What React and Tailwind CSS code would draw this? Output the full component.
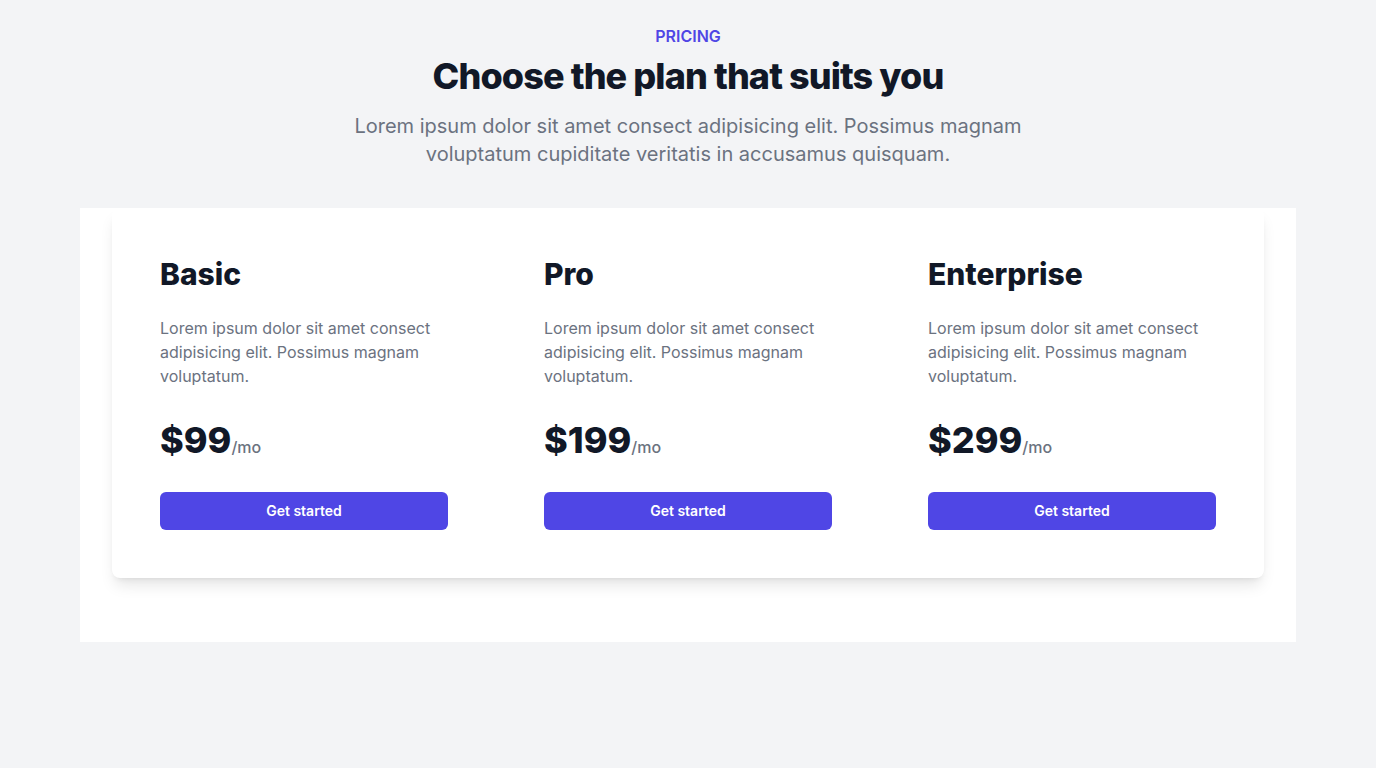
const plans = [
  { name: "Basic", price: "$99" },
  { name: "Pro", price: "$199" },
  { name: "Enterprise", price: "$299" },
];

const desc =
  "Lorem ipsum dolor sit amet consect adipisicing elit. Possimus magnam voluptatum.";

function PlanColumn({ plan }) {
  return (
    <div className="flex flex-col">
      <h3 className="text-3xl font-extrabold text-[#111827]">{plan.name}</h3>
      <p className="mt-6 text-base text-[#6b7280]">{desc}</p>
      <p className="mt-8 flex items-baseline">
        <span className="text-4xl font-extrabold text-[#111827]">
          {plan.price}
        </span>
        <span className="text-base font-medium text-[#6b7280]">/mo</span>
      </p>
      <button className="mt-8 h-[38px] w-full rounded-md bg-[#4f46e5] text-sm font-semibold text-white">
        Get started
      </button>
    </div>
  );
}

export default function App() {
  return (
    <div
      className="min-h-screen bg-[#f3f4f6] pt-6"
      style={{ fontFamily: "Inter, 'Noto Sans', sans-serif" }}
    >
      <div className="mx-auto max-w-3xl text-center">
        <h2 className="text-base font-semibold text-[#4f46e5]">PRICING</h2>
        <p className="mt-2 text-4xl font-extrabold tracking-tight text-[#111827]">
          Choose the plan that suits you
        </p>
        <p className="mx-auto mt-4 max-w-2xl text-xl text-[#6b7280]">
          Lorem ipsum dolor sit amet consect adipisicing elit. Possimus magnam
          voluptatum cupiditate veritatis in accusamus quisquam.
        </p>
      </div>
      <div className="mx-20 mt-10 bg-white px-8 pb-16">
        <div className="rounded-lg bg-white p-12 shadow-lg">
          <div className="grid grid-cols-3 gap-24">
            {plans.map((p) => (
              <PlanColumn key={p.name} plan={p} />
            ))}
          </div>
        </div>
      </div>
    </div>
  );
}
